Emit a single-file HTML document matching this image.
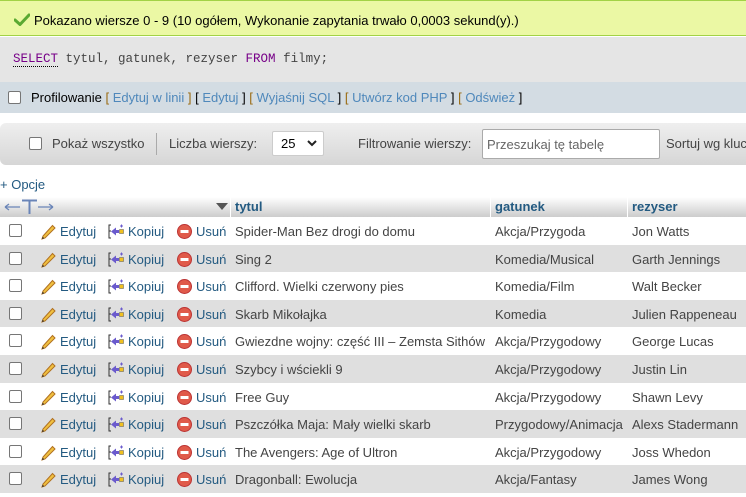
<!DOCTYPE html>
<html><head><meta charset="utf-8"><style>
*{margin:0;padding:0;box-sizing:border-box}
body{width:746px;height:497px;overflow:hidden;background:#fff;font-family:"Liberation Sans",Arial,sans-serif;font-size:13px;color:#444;position:relative}
.abs{position:absolute;white-space:nowrap}
a{color:#235a81;text-decoration:none}
.pb a{color:#4f88bb}
.pb b{font-weight:normal;color:#9a6a10}
.cb{position:absolute;width:13px;height:13px;border:1px solid #767676;border-radius:2px;background:#fff}
.row{position:absolute;left:0;width:746px;height:27.6px}
.row span{position:absolute;top:7px;white-space:nowrap}
</style></head><body>
<div class="abs" style="left:0;top:0;width:746px;height:36px;background:#ebf8a4;border-top:1px solid #a2d246;border-bottom:1px solid #a2d246"></div>
<svg class="abs" style="left:14px;top:13px" width="16" height="13" viewBox="0 0 16 13"><path d="M1 7 L6 11.5 L15 2" stroke="#5aa932" stroke-width="3" fill="none" stroke-linecap="round"/></svg>
<div class="abs" style="left:34px;top:13px;color:#000">Pokazano wiersze 0 - 9 (10 ogółem, Wykonanie zapytania trwało 0,0003 sekund(y).)</div>
<div class="abs" style="left:0;top:37px;width:746px;height:45px;background:#e5e5e5"></div>
<div class="abs" style="left:13px;top:52px;font-family:'Liberation Mono',monospace;font-size:12.5px;color:#444"><span style="color:#770088;border-bottom:1px dotted #000">SELECT</span> tytul, gatunek, rezyser <span style="color:#770088">FROM</span> filmy;</div>
<div class="abs" style="left:0;top:82px;width:746px;height:31px;background:#d3dce3"></div>
<div class="cb" style="left:8px;top:91px"></div>
<div class="abs pb" style="left:31px;top:90px;color:#000">Profilowanie <b>[</b> <a>Edytuj w linii</a> <b>]</b> [ <a>Edytuj</a> ] <b>[</b> <a>Wyjaśnij SQL</a> ] <b>[</b> <a>Utwórz kod PHP</a> ] <b>[</b> <a>Odśwież</a> ]</div>
<div class="abs" style="left:0;top:123px;width:760px;height:42px;border-radius:6px;background:linear-gradient(#efefef,#d6d6d6)"></div>
<div class="cb" style="left:29px;top:137px"></div>
<div class="abs" style="left:52px;top:136px;color:#444">Pokaż wszystko</div>
<div class="abs" style="left:156px;top:133px;width:1px;height:22px;background:#aaa"></div>
<div class="abs" style="left:169px;top:136px">Liczba wierszy:</div>
<div class="abs" style="left:272px;top:131px;width:52px;height:25px;background:#fff;border:1px solid #ccc;border-radius:2px;padding:4px 8px;color:#000">25<svg style="position:absolute;left:34px;top:8px" width="10" height="7"><path d="M1 1 L5 5 L9 1" stroke="#222" stroke-width="2" fill="none"/></svg></div>
<div class="abs" style="left:358px;top:136px">Filtrowanie wierszy:</div>
<div class="abs" style="left:482px;top:129px;width:178px;height:30px;background:#fff;border:1px solid #aaa;border-radius:2px;padding:7px 4px;color:#666">Przeszukaj tę tabelę</div>
<div class="abs" style="left:666px;top:136px">Sortuj wg klucza</div>
<div class="abs" style="left:0;top:177px;color:#235a81">+ Opcje</div>
<div class="abs" style="left:0;top:197px;width:746px;height:20px;background:linear-gradient(#fff,#ccc)"></div>
<div class="abs" style="left:230px;top:197px;width:1px;height:20px;background:#fff"></div>
<div class="abs" style="left:490px;top:197px;width:1px;height:20px;background:#fff"></div>
<div class="abs" style="left:627px;top:197px;width:1px;height:20px;background:#fff"></div>
<svg class="abs" style="left:4px;top:199px" width="50" height="16" viewBox="0 0 50 16"><path d="M1 8H16M1 8L5 5M1 8L5 11M34 8H49M49 8L45 5M49 8L45 11" stroke="#6a85b8" stroke-width="1.3" fill="none"/><path d="M18 1.5H33M25.5 1.5V15" stroke="#6a85b8" stroke-width="2" fill="none"/></svg>
<svg class="abs" style="left:216px;top:203px" width="12" height="8"><path d="M0 0 L12 0 L6 7Z" fill="#555"/></svg>
<div class="abs" style="left:235px;top:199px;font-weight:bold;color:#235a81">tytul</div>
<div class="abs" style="left:495px;top:199px;font-weight:bold;color:#235a81">gatunek</div>
<div class="abs" style="left:632px;top:199px;font-weight:bold;color:#235a81">rezyser</div>
<div id="rows"></div>
<script>
var d=[["Spider-Man Bez drogi do domu","Akcja/Przygoda","Jon Watts"],["Sing 2","Komedia/Musical","Garth Jennings"],["Clifford. Wielki czerwony pies","Komedia/Film","Walt Becker"],["Skarb Mikołajka","Komedia","Julien Rappeneau"],["Gwiezdne wojny: część III – Zemsta Sithów","Akcja/Przygodowy","George Lucas"],["Szybcy i wściekli 9","Akcja/Przygodowy","Justin Lin"],["Free Guy","Akcja/Przygodowy","Shawn Levy"],["Pszczółka Maja: Mały wielki skarb","Przygodowy/Animacja","Alexs Stadermann"],["The Avengers: Age of Ultron","Akcja/Przygodowy","Joss Whedon"],["Dragonball: Ewolucja","Akcja/Fantasy","James Wong"]];
var h="";
d.forEach(function(r,i){var t=217+i*27.6;
h+='<div class="row" style="top:'+t+'px;background:'+(i%2?'#dfdfdf':'#fff')+'">'+
'<div class="cb" style="left:9px;top:7px"></div>'+
'<svg style="position:absolute;left:40px;top:6px" width="17" height="17" viewBox="0 0 17 17"><path d="M3 13 L2 16 L5 15 L15 5 L12.5 2.5Z" fill="#f0c040" stroke="#b07020" stroke-width="1"/><path d="M2 16 L2.7 13.8 L4.3 15.3Z" fill="#333"/></svg>'+
'<span style="left:60px;color:#235a81">Edytuj</span>'+
'<svg style="position:absolute;left:108px;top:7px" width="16" height="15" viewBox="0 0 16 15"><path d="M3 1H1V14H3M1 7H3" stroke="#333" fill="none"/><path d="M3 7.5 L8 3.5 V6 H11 V9 H8 V11.5Z" fill="#6a5acd"/><rect x="11.5" y="5.5" width="4" height="4" fill="#f0c020" stroke="#555" stroke-width=".5"/><path d="M13.5 0.5V3.5M12 2H15" stroke="#6a5acd"/></svg>'+
'<span style="left:128px;color:#235a81">Kopiuj</span>'+
'<svg style="position:absolute;left:177px;top:7px" width="15" height="15"><circle cx="7.5" cy="7.5" r="7" fill="#e05a4a" stroke="#b33" stroke-width="1"/><rect x="3.5" y="6" width="8" height="3" fill="#fff"/></svg>'+
'<span style="left:196px;color:#235a81">Usuń</span>'+
'<span style="left:235px">'+r[0]+'</span><span style="left:495px">'+r[1]+'</span><span style="left:632px">'+r[2]+'</span></div>';});
document.getElementById("rows").innerHTML=h;
</script>
</body></html>
